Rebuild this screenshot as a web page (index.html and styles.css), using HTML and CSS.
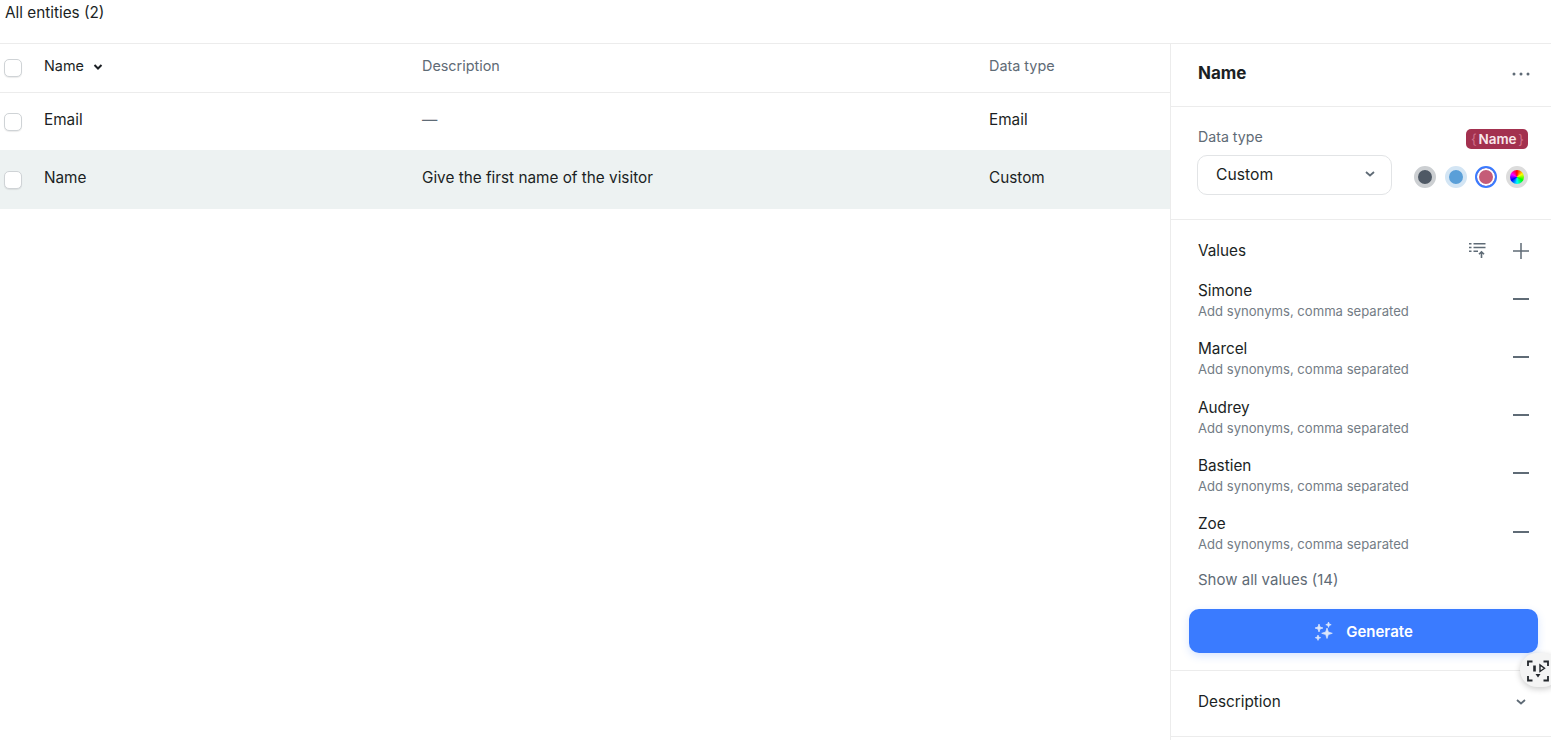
FILE: index.html
```html
<!DOCTYPE html>
<html lang="en">
<head>
    <meta charset="UTF-8">
    <title>All entities</title>
    <link rel="stylesheet" href="styles.css">
</head>
<body>
    <div class="topbar">All entities (2)</div>
    <div class="layout">
        <div class="table">
            <div class="row head">
                <span class="check"></span>
                <span class="cell sort">Name
                    <svg width="10" height="8" viewBox="0 0 10 8"><path d="M1.5 2l3.500 3.500L8.500 2" fill="none" stroke="#1b1f24" stroke-width="2"/></svg>
                </span>
                <span class="cell muted">Description</span>
                <span class="cell muted">Data type</span>
            </div>
            <div class="row item first">
                <span class="check"></span>
                <span class="cell">Email</span>
                <span class="cell muted">—</span>
                <span class="cell">Email</span>
            </div>
            <div class="row item selected">
                <span class="check"></span>
                <span class="cell">Name</span>
                <span class="cell">Give the first name of the visitor</span>
                <span class="cell">Custom</span>
            </div>
        </div>

        <aside class="panel">
            <div class="panel-head">
                <h2>Name</h2>
                <svg width="20" height="4" viewBox="0 0 20 4"><circle cx="3" cy="2" r="1.500" fill="#5f6b76"/><circle cx="10" cy="2" r="1.500" fill="#5f6b76"/><circle cx="17" cy="2" r="1.500" fill="#5f6b76"/></svg>
            </div>

            <div class="type-section">
                <div class="type-top">
                    <span class="muted">Data type</span>
                    <span class="tag"><i>{</i>Name<i>}</i></span>
                </div>
                <div class="type-bottom">
                    <div class="select">Custom
                        <svg width="12" height="8" viewBox="0 0 12 8"><path d="M2 2l4 3.500L10 2" fill="none" stroke="#5f6b76" stroke-width="1.800"/></svg>
                    </div>
                    <div class="swatches">
                        <span class="swatch grey"></span>
                        <span class="swatch blue"></span>
                        <span class="swatch red"></span>
                        <span class="swatch wheel"></span>
                    </div>
                </div>
            </div>

            <div class="values">
                <div class="values-head">
                    <span class="values-title">Values</span>
                    <div class="values-tools">
                        <svg width="18" height="18" viewBox="0 0 18 18" fill="none" stroke="#5f6b76" stroke-width="1.600"><path d="M0 2.800h2.500M4.500 2.800h12M0 6.500h2.500M4.500 6.500h12M0 10.200h2.500M4.500 10.200h4.500M12.500 17V11M10 13.300L12.500 10.800l2.500 2.500"/></svg>
                        <svg class="plus" width="16" height="16" viewBox="0 0 16 16"><path d="M8 0v16M0 8h16" stroke="#5f6b76" stroke-width="1.500"/></svg>
                    </div>
                </div>
                <div class="value"><div><p>Simone</p><small>Add synonyms, comma separated</small></div><span class="minus"></span></div>
                <div class="value"><div><p>Marcel</p><small>Add synonyms, comma separated</small></div><span class="minus"></span></div>
                <div class="value"><div><p>Audrey</p><small>Add synonyms, comma separated</small></div><span class="minus"></span></div>
                <div class="value"><div><p>Bastien</p><small>Add synonyms, comma separated</small></div><span class="minus"></span></div>
                <div class="value"><div><p>Zoe</p><small>Add synonyms, comma separated</small></div><span class="minus"></span></div>
                <div class="show-all">Show all values (14)</div>
                <button class="generate">
                    <svg width="20" height="20" viewBox="0 0 20 20" fill="#dce7fb" stroke="#dce7fb" stroke-width="0.700"><path d="M5 3l1 3 3 1-3 1-1 3-1-3-3-1 3-1zM14.500 1l.7 2 2 .7-2 .7-.7 2-.7-2-2-.7 2-.7zM13 7l1.300 4 4 1.300-4 1.300L13 17.500l-1.300-3.900-4-1.300 4-1.300zM4 14l.7 2 2 .7-2 .7-.7 2-.7-2-2-.7 2-.7z"/></svg>
                    Generate
                </button>
            </div>

            <div class="description">
                <span>Description</span>
                <svg width="12" height="8" viewBox="0 0 12 8"><path d="M2 2l4 3.500L10 2" fill="none" stroke="#5f6b76" stroke-width="1.800"/></svg>
            </div>
        </aside>
    </div>

    <div class="capture">
        <svg width="22" height="22" viewBox="0 0 22 22" fill="none" stroke="#23272c" stroke-width="1.800"><path d="M1 6V1.500h4.500M16.500 1.500H21V6M21 16v4.500h-4.500M5.500 20.500H1V16"/><path d="M7.500 5.500v6" stroke-width="2.600"/><path d="M13 5v6.500l4.500-3.200z" stroke-width="1.400"/><path d="M8.500 14h5l-2.500 3.500z" fill="#23272c" stroke="none"/></svg>
    </div>
</body>
</html>
```

FILE: styles.css
```css
* {
    box-sizing: border-box;
}
body {
    margin: 0;
    height: 740px;
    overflow: hidden;
    font-family: Inter, "Liberation Sans", sans-serif;
    font-size: 15.3px;
    color: #1b1f24;
    background-color: white;
}
.topbar {
    height: 44px;
    padding: 4px 5px 0;
    line-height: 18px;
    border-bottom: 1px solid #ececec;
}
.layout {
    display: flex;
    height: 696px;
}
.table {
    width: 1170px;
}
.row {
    display: grid;
    grid-template-columns: 44px 378px 567px 1fr;
    align-items: center;
}
.head {
    height: 49px;
    border-bottom: 1px solid #ececec;
    font-size: 14.4px;
}
.item {
    height: 59px;
}
.first {
    height: 57px;
}
.selected {
    background-color: #edf2f2;
}
.cell {
    margin-bottom: 5px;
}
.check {
    width: 18px;
    height: 18px;
    margin-left: 4px;
    background-color: white;
    border: 1px solid #cfd3d6;
    border-radius: 5px;
    box-shadow: 0 1px 1px rgba(0,0,0,0.08);
}
.muted {
    color: #5f6b76;
}
.sort svg {
    margin-left: 5px;
}
.panel {
    width: 381px;
    border-left: 1px solid #ececec;
}
.panel-head {
    height: 63px;
    padding: 0 20px 4px 27px;
    display: flex;
    align-items: center;
    justify-content: space-between;
    border-bottom: 1px solid #ececec;
}
.panel-head svg {
    margin-top: 2px;
}
h2 {
    margin: 0;
    font-size: 17px;
    font-weight: 700;
}
.type-section {
    height: 113px;
    padding: 20px 23px 0 26px;
    border-bottom: 1px solid #ececec;
}
.type-top {
    display: flex;
    justify-content: space-between;
    height: 20px;
    padding-left: 1px;
    font-size: 14.2px;
    line-height: 20px;
}
.tag {
    display: flex;
    align-items: center;
    justify-content: space-between;
    width: 62px;
    height: 20px;
    margin-top: 2px;
    padding: 0 4px 0 5px;
    border-radius: 5px;
    background-color: #a3314f;
    color: #f8e6ea;
    font-size: 13.500px;
    font-weight: 600;
}
.tag i {
    font-style: normal;
    font-weight: 400;
    color: #d0708a;
}
.type-bottom {
    display: flex;
    align-items: center;
    justify-content: space-between;
    margin-top: 8px;
}
.select {
    width: 195px;
    height: 40px;
    padding: 0 19px 2px 18px;
    display: flex;
    align-items: center;
    justify-content: space-between;
    border: 1px solid #e2e4e6;
    border-radius: 10px;
    font-size: 15.700px;
}
.select svg {
    margin-right: -4px;
}
.swatches {
    display: flex;
    gap: 8.600px;
    margin-top: 3px;
}
.swatch {
    width: 22px;
    height: 22px;
    border-radius: 50%;
    border: 4px solid;
}
.grey {
    background-color: #4f5965;
    border-color: #cccfd2;
}
.blue {
    background-color: #5a9fd8;
    border-color: #d3e5f4;
}
.red {
    background-color: #c55c78;
    border: 2px solid #3a7bff;
    box-shadow: inset 0 0 0 2px white;
}
.wheel {
    background: conic-gradient(red, yellow, lime, cyan, blue, magenta, red);
    border-color: #dcdcdc;
}
.values {
    height: 451px;
    padding: 0 13px 0 18px;
    border-bottom: 1px solid #ececec;
}
.values-head {
    height: 59px;
    padding: 0 9px 0 9px;
    display: flex;
    align-items: center;
    justify-content: space-between;
}
.values-title {
    margin-top: 1px;
}
.values-tools {
    display: flex;
    align-items: center;
    gap: 26px;
}
.plus {
    margin-top: 2px;
}
.value {
    height: 58.300px;
    padding: 2px 9px 0 9px;
    display: flex;
    justify-content: space-between;
}
.value p {
    margin: 0;
    line-height: 20px;
}
.value small {
    display: block;
    font-size: 13.100px;
    line-height: 20px;
    color: #737c85;
}
.minus {
    width: 16px;
    height: 2px;
    margin-top: 16.500px;
    background-color: #5f6b76;
}
.show-all {
    height: 39px;
    padding-left: 9px;
    font-size: 15px;
    line-height: 20px;
    color: #5f6b76;
}
.generate {
    width: 100%;
    height: 44px;
    display: flex;
    align-items: center;
    justify-content: center;
    gap: 12px;
    border: none;
    border-radius: 10px;
    background-color: #3a7bff;
    color: white;
    font-family: inherit;
    font-size: 15px;
    font-weight: 600;
    box-shadow: 0 3px 8px rgba(58,123,255,0.2);
}
.description {
    height: 66px;
    padding: 0 24px 4px 27px;
    display: flex;
    align-items: center;
    justify-content: space-between;
    border-bottom: 1px solid #ececec;
}
.description svg {
    margin-top: 4px;
    margin-bottom: 4px;
}
.capture {
    position: absolute;
    top: 653px;
    left: 1520px;
    width: 40px;
    height: 34px;
    padding: 7px 0 0 7px;
    border-radius: 17px;
    background-color: #f4f4f4;
    box-shadow: 0 2px 6px rgba(0,0,0,0.2);
}
```
